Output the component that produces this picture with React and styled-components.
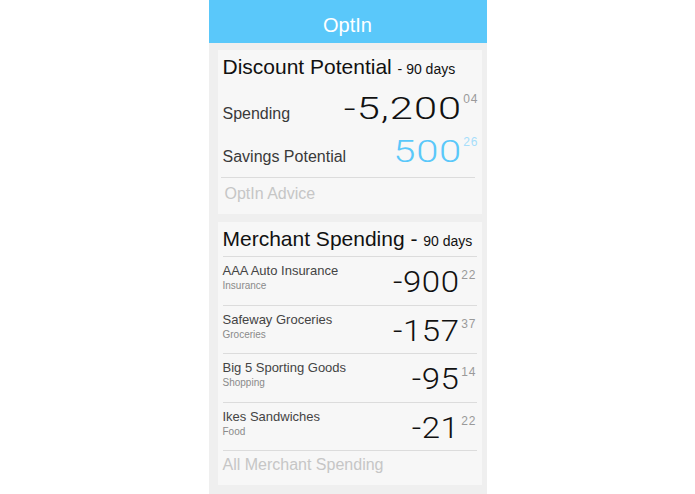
import React from "react";
import styled, { createGlobalStyle } from "styled-components";

const Global = createGlobalStyle`
  html, body { margin: 0; padding: 0; background: #ffffff; }
  body { font-family: "Liberation Sans", Arial, sans-serif; }
  * { box-sizing: border-box; }
`;

const Phone = styled.div`
  width: 278px;
  min-height: 100vh;
  margin: 0 auto;
  background: #efefef;
  display: flex;
  flex-direction: column;
`;

const Header = styled.header`
  height: 43px;
  padding-top: 8px;
  line-height: 35px;
  background: #5ac8fa;
  color: #ffffff;
  font-size: 20px;
  text-align: center;
`;

const Card = styled.section`
  margin: ${(p) => p.$top}px 5px 0 9px;
  padding: 4px 3px ${(p) => p.$bottom}px 5px;
  background: #f7f7f7;
  display: flex;
  flex-direction: column;
`;

const Title = styled.h2`
  margin: 0;
  font-size: 21px;
  font-weight: normal;
  line-height: 26px;
  color: #111111;
  white-space: nowrap;
`;

const Small = styled.span`
  font-size: 14px;
`;

const Divider = styled.div`
  height: 1px;
  background: #dcdcdc;
  margin: ${(p) => p.$top || 0}px ${(p) => p.$right}px 0 ${(p) => p.$left}px;
`;

const SummaryRow = styled.div`
  display: flex;
  justify-content: space-between;
  align-items: baseline;
  margin-top: ${(p) => p.$top}px;
`;

const Label = styled.span`
  font-size: 16px;
  line-height: 20px;
  color: #3a3a3a;
`;

const Amount = styled.div`
  display: flex;
  align-items: flex-start;
  margin-top: ${(p) => p.$top || 0}px;
`;

const Figure = styled.span`
  display: inline-block;
  font-family: Roboto, "Liberation Sans", sans-serif;
  font-weight: 300;
  font-size: ${(p) => p.$size}px;
  letter-spacing: ${(p) => p.$spacing}px;
  line-height: 1;
  color: ${(p) => p.$color};
  transform: scaleX(${(p) => p.$stretch || 1});
  transform-origin: right center;
`;

const Cents = styled.span`
  font-size: 12px;
  letter-spacing: 1px;
  line-height: 1;
  color: ${(p) => p.$color};
  margin-top: ${(p) => p.$top}px;
  margin-left: ${(p) => p.$left}px;
`;

const LinkText = styled.div`
  font-size: 16px;
  line-height: 20px;
  color: #c6c6c6;
  margin-top: ${(p) => p.$top}px;
  padding-left: ${(p) => p.$indent || 0}px;
`;

const MerchantRow = styled.div`
  height: 48.5px;
  padding-top: 6px;
  border-bottom: 1px solid #dcdcdc;
  margin-right: 2px;
  display: flex;
  justify-content: space-between;
  align-items: flex-start;
`;

const Info = styled.div`
  display: flex;
  flex-direction: column;
`;

const Name = styled.span`
  font-size: 13px;
  line-height: 15px;
  color: #444444;
`;

const Category = styled.span`
  font-size: 10px;
  line-height: 12px;
  margin-top: 2px;
  color: #8a8a8a;
`;

const merchants = [
  { name: "AAA Auto Insurance", category: "Insurance", whole: "-900", cents: "22" },
  { name: "Safeway Groceries", category: "Groceries", whole: "-157", cents: "37" },
  { name: "Big 5 Sporting Goods", category: "Shopping", whole: "-95", cents: "14" },
  { name: "Ikes Sandwiches", category: "Food", whole: "-21", cents: "22" },
];

export default function App() {
  return (
    <>
      <Global />
      <Phone>
        <Header>OptIn</Header>

        <Card $top={7} $bottom={10}>
          <Title>
            Discount Potential <Small>- 90 days</Small>
          </Title>
          <SummaryRow $top={10}>
            <Label>Spending</Label>
            <Amount>
              <Figure $size={32} $spacing={0.8} $stretch={1.3} $color="#111111">-5,200</Figure>
              <Cents $color="#9a9a9a" $top={1} $left={1}>04</Cents>
            </Amount>
          </SummaryRow>
          <SummaryRow $top={11}>
            <Label>Savings Potential</Label>
            <Amount>
              <Figure $size={32} $spacing={0.5} $stretch={1.25} $color="#5ac8fa">500</Figure>
              <Cents $color="#a6defb" $top={1} $left={1}>26</Cents>
            </Amount>
          </SummaryRow>
          <Divider $top={10} $left={-2} $right={4} />
          <LinkText $top={6} $indent={2}>OptIn Advice</LinkText>
        </Card>

        <Card $top={8} $bottom={10}>
          <Title>
            Merchant Spending - <Small>90 days</Small>
          </Title>
          <Divider $top={2} $left={0} $right={2} />
          {merchants.map((m) => (
            <MerchantRow key={m.name}>
              <Info>
                <Name>{m.name}</Name>
                <Category>{m.category}</Category>
              </Info>
              <Amount $top={4}>
                <Figure $size={30} $spacing={0.5} $stretch={1.1} $color="#111111">{m.whole}</Figure>
                <Cents $color="#9a9a9a" $top={2} $left={2}>{m.cents}</Cents>
              </Amount>
            </MerchantRow>
          ))}
          <LinkText $top={4}>All Merchant Spending</LinkText>
        </Card>
      </Phone>
    </>
  );
}
